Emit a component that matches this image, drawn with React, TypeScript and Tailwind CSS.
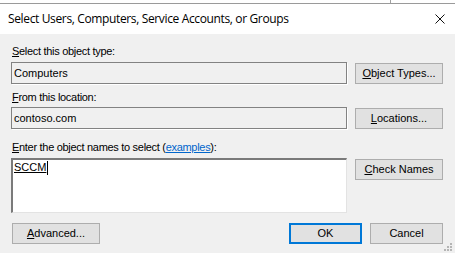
import * as React from "react";

const ui = { fontFamily: '"Liberation Sans", Arial, sans-serif' };

function Key({ children }: { children: React.ReactNode }) {
  return <span className="underline underline-offset-[1px]">{children}</span>;
}

function WinButton({
  children,
  className = "",
  primary = false,
}: {
  children: React.ReactNode;
  className?: string;
  primary?: boolean;
}) {
  return (
    <button
      type="button"
      className={
        "h-[21px] bg-[#e1e1e1] text-[11px] leading-[13px] text-black flex items-center justify-center " +
        (primary ? "border-2 border-[#0078d7] " : "border border-[#adadad] ") +
        className
      }
    >
      {children}
    </button>
  );
}

function Label({ children, className = "" }: { children: React.ReactNode; className?: string }) {
  return (
    <div className={"h-[13px] text-[11px] leading-[13px] tracking-[-0.3px] text-black " + className}>
      {children}
    </div>
  );
}

function ReadOnlyBox({ value }: { value: string }) {
  return (
    <div className="w-[336px] h-[22px] border border-[#828282] shadow-[1px_1px_0_#ffffff] bg-[#f0f0f0] pl-[2px] text-[11px] leading-[20px] text-black">
      {value}
    </div>
  );
}

export default function App() {
  return (
    <div className="w-[455px] h-[253px] bg-[#f0f0f0] relative overflow-hidden" style={ui}>
      {/* sliver of the window behind */}
      <div className="h-[3px] bg-white flex">
        <div className="w-[390px]" />
        <div className="border-l border-[#a0a0a0]" />
      </div>
      <div className="h-px bg-[#9a9a9a]" />

      {/* title bar */}
      <div className="h-[30px] bg-white flex items-center justify-between pl-[8px] pr-[10px]">
        <span
          className="text-[12px] tracking-[-0.36px] text-black"
          style={{ fontFamily: '"Open Sans", "Noto Sans", sans-serif' }}
        >
          Select Users, Computers, Service Accounts, or Groups
        </span>
        <svg width="10" height="10" viewBox="0 0 10 10">
          <path d="M0.5 0.5 L9.5 9.5 M9.5 0.5 L0.5 9.5" stroke="#111" strokeWidth="1" />
        </svg>
      </div>

      {/* body */}
      <div className="pt-[11px] pl-[11px]">
        <Label className="pl-px">
          <Key>S</Key>elect this object type:
        </Label>
        <div className="mt-[4px] flex gap-2 items-start">
          <ReadOnlyBox value="Computers" />
          <WinButton className="w-[88px] mt-px">
            <Key>O</Key>bject Types...
          </WinButton>
        </div>

        <Label className="mt-[7px] pl-px">
          <Key>F</Key>rom this location:
        </Label>
        <div className="mt-[3px] flex gap-2 items-start">
          <ReadOnlyBox value="contoso.com" />
          <WinButton className="w-[88px] mt-px">
            <Key>L</Key>ocations...
          </WinButton>
        </div>

        <Label className="mt-[12px] pl-px">
          <Key>E</Key>nter the object names to select (
          <span className="text-[#0066cc] underline underline-offset-[1px]">examples</span>):
        </Label>
        <div className="mt-[4px] flex gap-2 items-start">
          <div className="w-[336px] h-[55px] bg-white border-t-2 border-l-2 border-t-[#7a7a7a] border-l-[#7a7a7a] border-r border-b border-r-[#e3e3e3] border-b-[#e3e3e3] pt-px pl-px">
            <div className="flex items-start h-[14px]">
              <span className="text-[11px] leading-[13px] text-black underline underline-offset-[1px]">SCCM</span>
              <span className="ml-px w-px h-[14px] bg-black" />
            </div>
          </div>
          <WinButton className="w-[88px] mt-px">
            <Key>C</Key>heck Names
          </WinButton>
        </div>

        <div className="mt-[10px] w-[432px] flex justify-between">
          <WinButton className="w-[88px] ml-px">
            <Key>A</Key>dvanced...
          </WinButton>
          <div className="flex gap-2">
            <WinButton className="w-[73px]" primary>
              OK
            </WinButton>
            <WinButton className="w-[73px]">Cancel</WinButton>
          </div>
        </div>
      </div>

      {/* size grip */}
      <svg className="absolute right-[3px] bottom-[2px]" width="8" height="8" viewBox="0 0 8 8">
        <g fill="#b5b5b5">
          <rect x="6" y="0" width="2" height="2" />
          <rect x="3" y="3" width="2" height="2" />
          <rect x="6" y="3" width="2" height="2" />
          <rect x="0" y="6" width="2" height="2" />
          <rect x="3" y="6" width="2" height="2" />
          <rect x="6" y="6" width="2" height="2" />
        </g>
      </svg>
    </div>
  );
}
